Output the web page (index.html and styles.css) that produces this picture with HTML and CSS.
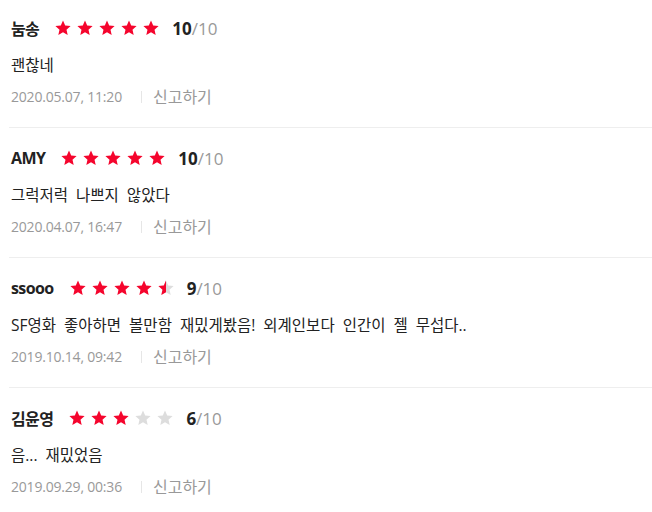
FILE: index.html
```html
<!DOCTYPE html>
<html lang="ko">
<head>
  <meta charset="UTF-8">
  <meta name="viewport" content="width=device-width, initial-scale=1.0">
  <title>관람평</title>
  <link rel="stylesheet" href="styles.css">
</head>
<body>
  <svg width="0" height="0" class="defs">
    <defs>
      <path id="star" d="M8 0.6 L10.2 5.6 L15.6 6.1 L11.5 9.7 L12.7 15 L8 12.2 L3.3 15 L4.5 9.7 L0.4 6.1 L5.8 5.6 Z" />
      <clipPath id="half"><rect x="0" y="0" width="8" height="16" /></clipPath>
    </defs>
  </svg>

  <ul class="reviews">
    <li class="review">
      <div class="head">
        <span class="name">눔송</span>
        <span class="stars">
          <svg class="star on" viewBox="0 0 16 16"><use href="#star"/></svg>
          <svg class="star on" viewBox="0 0 16 16"><use href="#star"/></svg>
          <svg class="star on" viewBox="0 0 16 16"><use href="#star"/></svg>
          <svg class="star on" viewBox="0 0 16 16"><use href="#star"/></svg>
          <svg class="star on" viewBox="0 0 16 16"><use href="#star"/></svg>
        </span>
        <span class="score"><b>10</b>/10</span>
      </div>
      <p class="comment">괜찮네</p>
      <div class="meta">
        <span class="date">2020.05.07, 11:20</span>
        <a class="report" href="#">신고하기</a>
      </div>
    </li>
    <li class="review">
      <div class="head">
        <span class="name">AMY</span>
        <span class="stars">
          <svg class="star on" viewBox="0 0 16 16"><use href="#star"/></svg>
          <svg class="star on" viewBox="0 0 16 16"><use href="#star"/></svg>
          <svg class="star on" viewBox="0 0 16 16"><use href="#star"/></svg>
          <svg class="star on" viewBox="0 0 16 16"><use href="#star"/></svg>
          <svg class="star on" viewBox="0 0 16 16"><use href="#star"/></svg>
        </span>
        <span class="score"><b>10</b>/10</span>
      </div>
      <p class="comment">그럭저럭 나쁘지 않았다</p>
      <div class="meta">
        <span class="date">2020.04.07, 16:47</span>
        <a class="report" href="#">신고하기</a>
      </div>
    </li>
    <li class="review">
      <div class="head">
        <span class="name">ssooo</span>
        <span class="stars">
          <svg class="star on" viewBox="0 0 16 16"><use href="#star"/></svg>
          <svg class="star on" viewBox="0 0 16 16"><use href="#star"/></svg>
          <svg class="star on" viewBox="0 0 16 16"><use href="#star"/></svg>
          <svg class="star on" viewBox="0 0 16 16"><use href="#star"/></svg>
          <svg class="star" viewBox="0 0 16 16"><use href="#star"/><use class="fill" href="#star" clip-path="url(#half)"/></svg>
        </span>
        <span class="score"><b>9</b>/10</span>
      </div>
      <p class="comment">SF영화 좋아하면 볼만함 재밌게봤음! 외계인보다 인간이 젤 무섭다..</p>
      <div class="meta">
        <span class="date">2019.10.14, 09:42</span>
        <a class="report" href="#">신고하기</a>
      </div>
    </li>
    <li class="review">
      <div class="head">
        <span class="name">김윤영</span>
        <span class="stars">
          <svg class="star on" viewBox="0 0 16 16"><use href="#star"/></svg>
          <svg class="star on" viewBox="0 0 16 16"><use href="#star"/></svg>
          <svg class="star on" viewBox="0 0 16 16"><use href="#star"/></svg>
          <svg class="star" viewBox="0 0 16 16"><use href="#star"/></svg>
          <svg class="star" viewBox="0 0 16 16"><use href="#star"/></svg>
        </span>
        <span class="score"><b>6</b>/10</span>
      </div>
      <p class="comment">음... 재밌었음</p>
      <div class="meta">
        <span class="date">2019.09.29, 00:36</span>
        <a class="report" href="#">신고하기</a>
      </div>
    </li>
  </ul>
</body>
</html>
```

FILE: styles.css
```css
body {
  margin: 0;
  background: #fff;
  color: #222;
  font-family: "Open Sans", "Noto Sans CJK KR", sans-serif;
  font-size: 15px;
}
.defs {
  position: absolute;
}
.reviews {
  list-style: none;
  margin: -2px 0 0;
  padding: 0 0 0 9px;
}
.review {
  padding: 19px 0 20px 2px;
  border-bottom: 1px solid #eeeeee;
}
.head {
  display: flex;
  align-items: center;
  height: 22px;
}
.name {
  font-weight: bold;
  font-size: 16px;
  letter-spacing: -0.6px;
  color: #222;
}
.stars {
  display: flex;
  gap: 6px;
  margin-left: 16px;
}
.star {
  width: 16px;
  height: 16px;
  fill: #dddddd;
}
.star.on,
.star .fill {
  fill: #f5052d;
}
.score {
  margin-left: 13px;
  font-size: 17px;
  color: #999;
}
.score b {
  color: #222;
}
.comment {
  margin: 15px 0 0;
  line-height: 22px;
  font-size: 15.5px;
  color: #222;
  word-spacing: 4px;
}
.meta {
  display: flex;
  align-items: center;
  margin-top: 9px;
  height: 22px;
  color: #999;
}
.date {
  font-size: 14px;
  letter-spacing: -0.2px;
}
.date::after {
  content: "";
  display: inline-block;
  width: 1px;
  height: 12px;
  background: #e6e6e6;
  margin: 0 11px 0 19px;
  vertical-align: -1px;
}
.report {
  color: #999;
  font-size: 16px;
  text-decoration: none;
}
```
